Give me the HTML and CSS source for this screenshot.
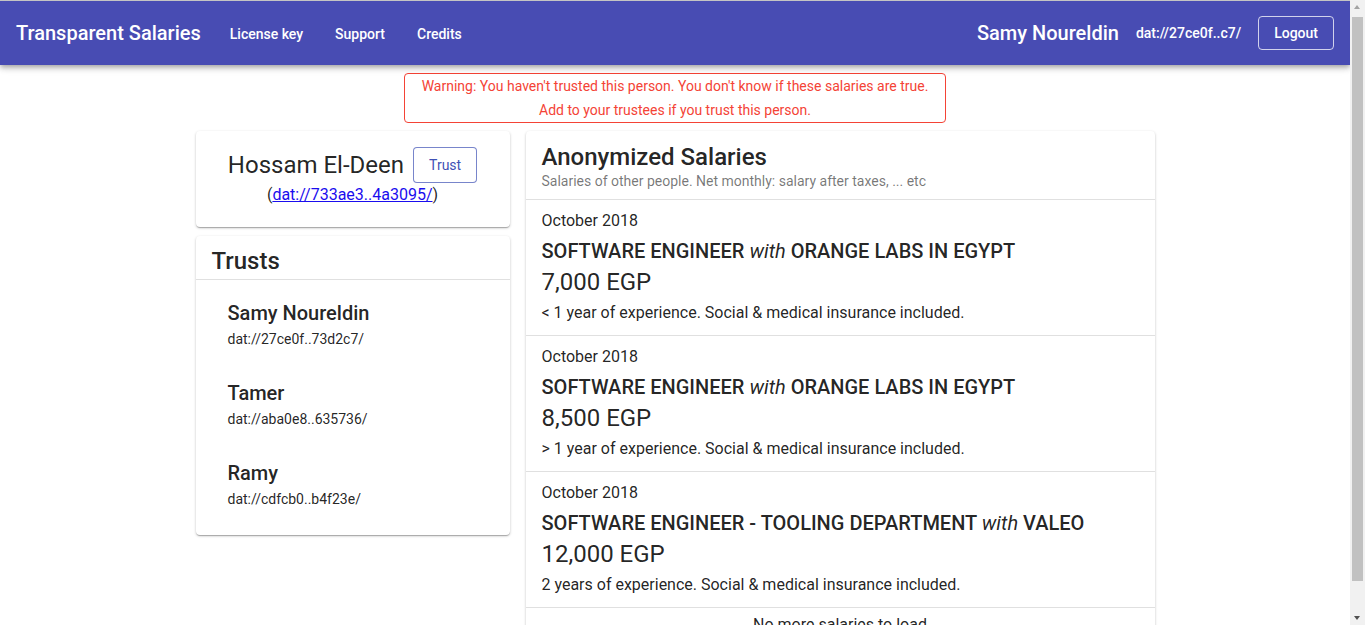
FILE: index.html
```html
<!DOCTYPE html>
<html lang="en">
<head>
<meta charset="utf-8">
<title>Transparent Salaries</title>
<link rel="stylesheet" href="styles.css">
</head>
<body>
<header class="appbar">
  <div class="toolbar">
    <div class="brand">Transparent Salaries</div>
    <nav class="nav">
      <a class="nav-btn">License key</a>
      <a class="nav-btn">Support</a>
      <a class="nav-btn">Credits</a>
    </nav>
    <div class="spacer"></div>
    <div class="user-name">Samy Noureldin</div>
    <div class="user-dat">dat://27ce0f..c7/</div>
    <button class="logout">Logout</button>
  </div>
</header>
<main class="main">
  <div class="warning">Warning: You haven't trusted this person. You don't know if these salaries are true.<br>Add to your trustees if you trust this person.</div>
  <div class="grid">
    <div class="left">
      <section class="card profile">
        <div class="profile-row">
          <span class="profile-name">Hossam El-Deen</span>
          <button class="trust-btn">Trust</button>
        </div>
        <div class="profile-link">(<a href="#" class="dat-link">dat://733ae3..4a3095/</a>)</div>
      </section>
      <section class="card trusts">
        <h2 class="trusts-title">Trusts</h2>
        <ul class="trust-list">
          <li class="trust-item"><div class="trust-name">Samy Noureldin</div><div class="trust-dat">dat://27ce0f..73d2c7/</div></li>
          <li class="trust-item"><div class="trust-name">Tamer</div><div class="trust-dat">dat://aba0e8..635736/</div></li>
          <li class="trust-item"><div class="trust-name">Ramy</div><div class="trust-dat">dat://cdfcb0..b4f23e/</div></li>
        </ul>
      </section>
    </div>
    <section class="card salaries">
      <div class="sal-header">
        <h2 class="sal-title">Anonymized Salaries</h2>
        <div class="sal-sub">Salaries of other people. Net monthly: salary after taxes, ... etc</div>
      </div>
      <div class="sal-item">
        <div class="sal-date">October 2018</div>
        <div class="sal-job">SOFTWARE ENGINEER <em>with</em> ORANGE LABS IN EGYPT</div>
        <div class="sal-amount">7,000 EGP</div>
        <div class="sal-desc">&lt; 1 year of experience. Social &amp; medical insurance included.</div>
      </div>
      <div class="sal-item">
        <div class="sal-date">October 2018</div>
        <div class="sal-job">SOFTWARE ENGINEER <em>with</em> ORANGE LABS IN EGYPT</div>
        <div class="sal-amount">8,500 EGP</div>
        <div class="sal-desc">&gt; 1 year of experience. Social &amp; medical insurance included.</div>
      </div>
      <div class="sal-item">
        <div class="sal-date">October 2018</div>
        <div class="sal-job">SOFTWARE ENGINEER - TOOLING DEPARTMENT <em>with</em> VALEO</div>
        <div class="sal-amount">12,000 EGP</div>
        <div class="sal-desc">2 years of experience. Social &amp; medical insurance included.</div>
      </div>
      <div class="sal-end">No more salaries to load</div>
    </section>
  </div>
</main>
<div class="scrollbar" aria-hidden="true">
  <span class="sb-up"></span>
  <span class="sb-thumb"></span>
  <span class="sb-down"></span>
</div>
</body>
</html>
```
FILE: styles.css
```css
* { box-sizing: border-box; }
html, body { margin: 0; padding: 0; background: #fff; }
body {
  font-family: Roboto, "Liberation Sans", Arial, sans-serif;
  color: rgba(0,0,0,0.87);
  border-top: 1px solid #c4c4c4;
  margin-right: 15px;
}
.appbar {
  background: #484cb3;
  color: #fff;
  box-shadow: 0 2px 4px -1px rgba(0,0,0,.2), 0 4px 5px 0 rgba(0,0,0,.14), 0 1px 10px 0 rgba(0,0,0,.12);
  position: relative;
  z-index: 2;
}
.toolbar {
  height: 64px;
  display: flex;
  align-items: center;
  padding: 0 16px;
}
.brand { font-size: 20px; font-weight: 500; margin-right: 13px; }
.nav { display: flex; }
.nav-btn { font-size: 14px; font-weight: 500; padding: 8px 16px; line-height: 20px; margin-top: 2px; }
.spacer { flex: 1; }
.user-name { font-size: 20px; font-weight: 500; margin-right: 17px; }
.user-dat { font-size: 14px; font-weight: 500; margin-right: 17px; }
.logout {
  font-family: inherit;
  font-size: 14px;
  font-weight: 500;
  color: #fff;
  background: transparent;
  border: 1px solid rgba(255,255,255,0.75);
  border-radius: 4px;
  height: 34px;
  padding: 0 15px;
  margin-top: -1px;
}
.main {
  display: flex;
  flex-direction: column;
  align-items: center;
  padding-bottom: 8px;
}
.warning {
  margin-top: 8px;
  border: 1px solid #f44336;
  border-radius: 4px;
  color: #f44336;
  font-size: 14px;
  line-height: 24px;
  text-align: center;
  padding: 0 17px;
}
.grid {
  margin-top: 8px;
  display: grid;
  grid-template-columns: 314px 629px;
  gap: 16px;
  align-items: start;
}
.card {
  background: #fff;
  border-radius: 4px;
  box-shadow: 0 1px 3px 0 rgba(0,0,0,.2), 0 1px 1px 0 rgba(0,0,0,.14), 0 2px 1px -1px rgba(0,0,0,.12);
}
.profile { padding: 16px 16px 20px; text-align: center; }
.profile-row { display: flex; justify-content: center; align-items: center; height: 36px; }
.profile-name { font-size: 24px; line-height: 32px; }
.trust-btn {
  font-family: inherit;
  font-size: 14px;
  color: #3f51b5;
  background: #fff;
  border: 1px solid rgba(63,81,181,0.7);
  border-radius: 4px;
  height: 36px;
  padding: 0 15px;
  margin-left: 9px;
}
.profile-link { font-size: 16px; line-height: 24px; }
.dat-link { color: #1a0dee; }
.trusts { margin-top: 9px; }
.trusts-title {
  margin: 0;
  font-size: 24px;
  font-weight: 500;
  line-height: 32px;
  padding: 9px 16px 2px;
  border-bottom: 1px solid #e0e0e0;
}
.trust-list { list-style: none; margin: 0; padding: 1px 0 14px; }
.trust-item { height: 80px; padding: 16px 32px 12px; }
.trust-name { font-size: 20px; font-weight: 500; line-height: 32px; }
.trust-dat { font-size: 14px; line-height: 20px; }
.sal-header { padding: 11px 16px 9px; border-bottom: 1px solid #e0e0e0; }
.sal-title { margin: 0; font-size: 24px; font-weight: 500; line-height: 30px; }
.sal-sub { font-size: 14px; line-height: 18px; color: rgba(0,0,0,0.54); }
.sal-item { padding: 9px 16px 10px; border-bottom: 1px solid #e0e0e0; }
.sal-date { font-size: 16px; line-height: 24px; }
.sal-job { font-size: 20px; font-weight: 500; line-height: 37px; }
.sal-job em { font-weight: 400; }
.sal-amount { font-size: 24px; line-height: 25px; }
.sal-desc { font-size: 16px; line-height: 24px; margin-top: 6px; }
.sal-end { text-align: center; font-size: 16px; line-height: 24px; padding: 5px 16px 16px; }
.scrollbar {
  position: fixed;
  top: 0;
  right: 0;
  bottom: 0;
  width: 15px;
  background: #f1f1f1;
  z-index: 5;
}
.sb-thumb {
  position: absolute;
  left: 2px;
  right: 2px;
  top: 17px;
  height: 564px;
  background: #c1c1c1;
}
.sb-up, .sb-down {
  position: absolute;
  left: 4px;
  width: 0;
  height: 0;
  border-left: 3.5px solid transparent;
  border-right: 3.5px solid transparent;
}
.sb-up { top: 5px; border-bottom: 4px solid #a3a3a3; }
.sb-down { bottom: 5px; border-top: 4px solid #505050; }
```
